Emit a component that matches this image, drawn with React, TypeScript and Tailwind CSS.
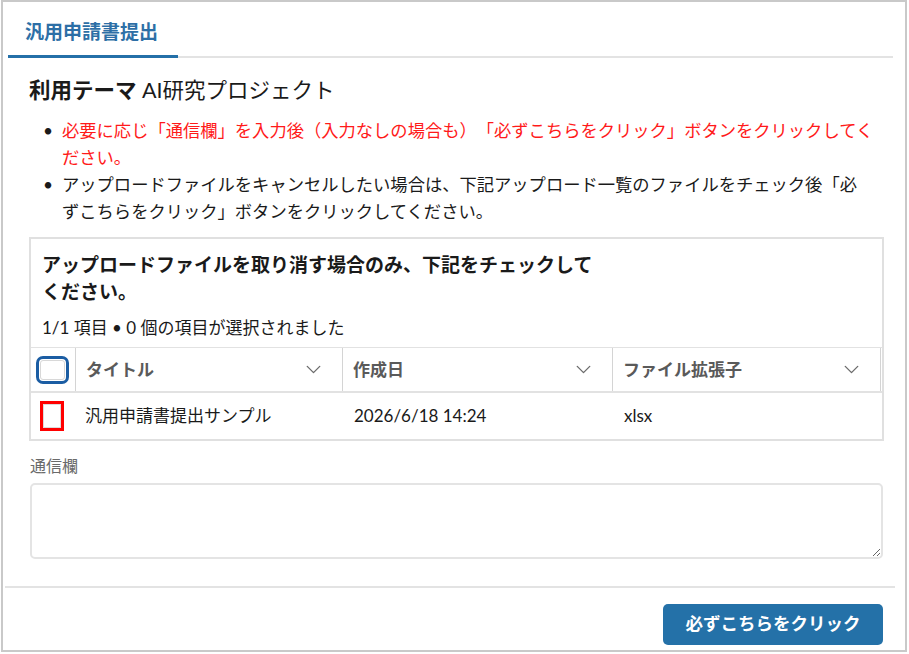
import { ChevronDown } from "lucide-react";

const font = "font-['Lato','Noto_Sans_CJK_JP',sans-serif]";

function HeaderCell({ label, last }: { label: string; last?: boolean }) {
  return (
    <div
      className={`flex items-center justify-between h-full pl-[10px] pr-[16px] border-l border-[#d4d4d4] ${last ? "border-r" : ""}`}
    >
      <span className="text-[17px] font-bold text-[#5a5a5a]">{label}</span>
      <ChevronDown size={25} strokeWidth={1.3} className="text-[#6b6b6b]" />
    </div>
  );
}

export default function App() {
  return (
    <div className={`w-[909px] h-[654px] bg-white ${font} text-[#1a1a1a] [text-spacing-trim:space-all]`}>
      <div className="ml-[1px] w-[906px] h-[652px] border-2 border-[#c9c9c9] flex flex-col">
        {/* tab bar */}
        <div className="flex items-end ml-[5px] mr-[12px] mt-[18px]">
          <div className="pl-[17px] pr-[20px] pb-[11px] border-b-[3px] border-[#2470a8] text-[19px] font-bold text-[#2d6fa6] leading-[24px]">
            汎用申請書提出
          </div>
          <div className="flex-1 border-b-2 border-[#e3e3e3]" />
        </div>

        <div className="pl-[26px] pr-[22px]">
          <h1 className="mt-[18px] text-[21.5px] leading-[28px]">
            <span className="font-bold">利用テーマ</span> AI研究プロジェクト
          </h1>

          <ul className="mt-[13px] pl-[14px] text-[17.3px] leading-[27px]">
            <li className="flex">
              <span className="w-[19px] shrink-0 text-[#1a1a1a]">•</span>
              <span className="text-[#ff1a1a]">
                必要に応じ「通信欄」を入力後（入力なしの場合も）「必ずこちらをクリック」ボタンをクリックしてください。
              </span>
            </li>
            <li className="flex">
              <span className="w-[19px] shrink-0">•</span>
              <span>
                アップロードファイルをキャンセルしたい場合は、下記アップロード一覧のファイルをチェック後「必
                <br />
                ずこちらをクリック」ボタンをクリックしてください。
              </span>
            </li>
          </ul>

          {/* upload list */}
          <div className="mt-[12px] w-[855px] border-2 border-[#e0e0e0]">
            <div className="px-[11px] pt-[12px] text-[19px] font-bold leading-[27px]">
              アップロードファイルを取り消す場合のみ、下記をチェックして
              <br />
              ください。
            </div>
            <div className="px-[11px] mt-[12px] text-[17px] leading-[22px]">
              1/1 項目 • 0 個の項目が選択されました
            </div>
            <div className="mt-[8px] grid grid-cols-[44px_267px_270px_269px] h-[46px] border-t border-b-2 border-[#e2e2e2] items-center">
              <div className="flex items-center pl-[5px]">
                <div className="w-[33px] h-[28px] rounded-[7px] border-[3px] border-[#1b5da3] flex items-center justify-center">
                  <div className="w-[25px] h-[20px] rounded-[3px] border border-[#d8d8d8]" />
                </div>
              </div>
              <HeaderCell label="タイトル" />
              <HeaderCell label="作成日" />
              <HeaderCell label="ファイル拡張子" last />
            </div>
            <div className="grid grid-cols-[44px_267px_270px_269px] h-[46px] items-center text-[17px]">
              <div className="flex items-center pl-[9px]">
                <div className="w-[24px] h-[30px] border-[3px] border-[#ff0000] flex items-center justify-center">
                  <div className="w-[18px] h-[24px] border border-[#dcdcdc]" />
                </div>
              </div>
              <div className="pl-[10px]">汎用申請書提出サンプル</div>
              <div className="pl-[12px]">2026/6/18 14:24</div>
              <div className="pl-[12px]">xlsx</div>
            </div>
          </div>

          <div className="mt-[14px] pl-[1px] text-[16px] leading-[22px] text-[#6a6a6a]">通信欄</div>
          <textarea className="mt-[6px] ml-[1px] block w-[853px] h-[76px] rounded-[5px] border-2 border-[#e4e4e4] outline-none" />
        </div>

        <div className="mt-[27px] ml-[2px] mr-[10px] border-t-2 border-[#e3e3e3]" />

        <div className="flex justify-end pr-[22px] pt-[16px]">
          <button className="w-[220px] h-[41px] rounded-[5px] bg-[#2471a8] text-white text-[17.5px] font-bold">
            必ずこちらをクリック
          </button>
        </div>
      </div>
    </div>
  );
}
